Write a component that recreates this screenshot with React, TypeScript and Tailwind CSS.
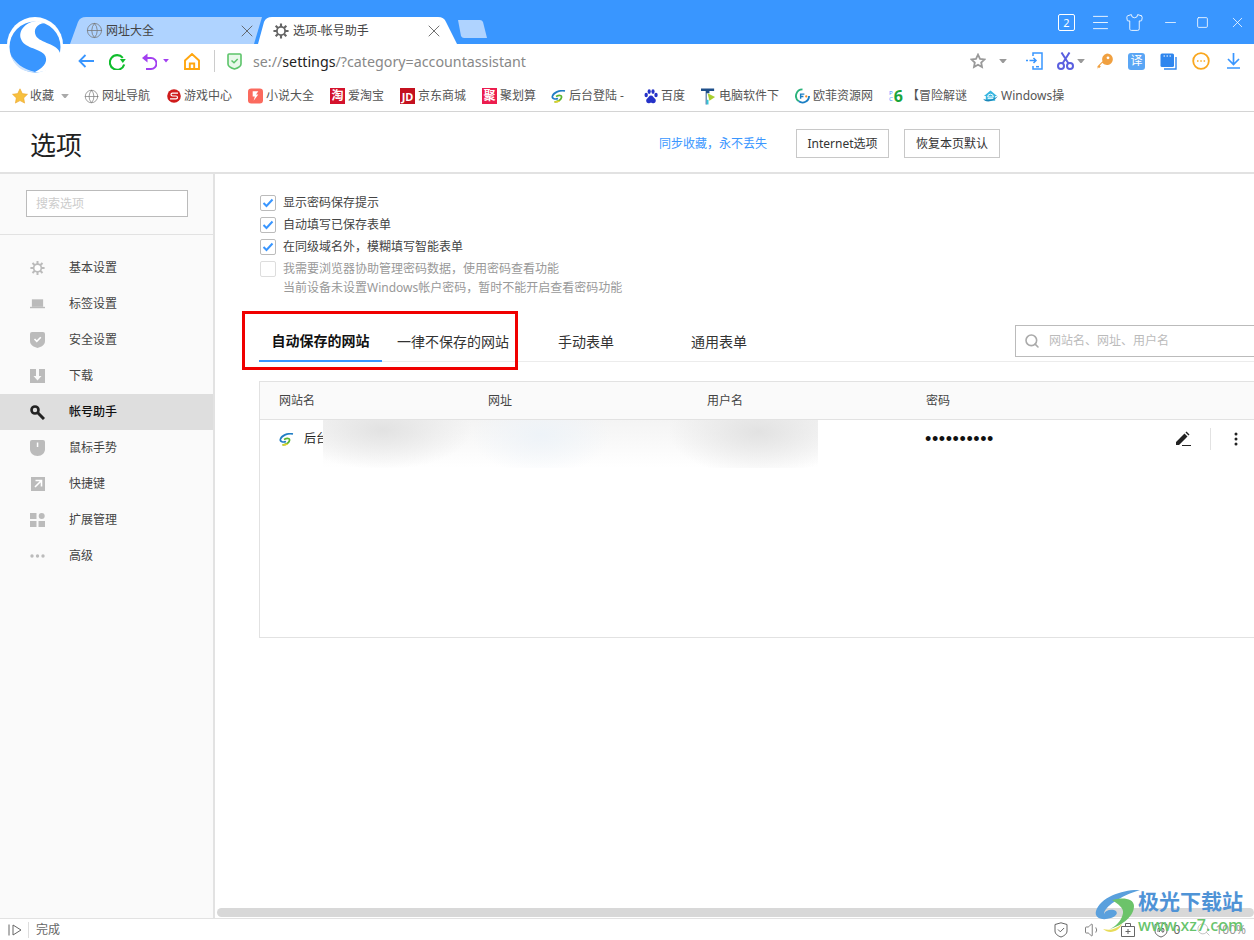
import React from "react";
import { Globe, X, Minus, Square, Menu, Shirt, Search, Volume1 } from "lucide-react";

const Caret = ({ c = "#999", w = 8 }: { c?: string; w?: number }) => (
  <svg width={w} height={w * 0.6} viewBox="0 0 8 5"><path d="M0 0h8L4 5z" fill={c} /></svg>
);

const Gear = ({ size = 18, c = "#777" }: { size?: number; c?: string }) => (
  <svg width={size} height={size} viewBox="0 0 18 18">
    <g stroke={c} strokeWidth="2.4">
      <path d="M9 0.5V17.5M0.5 9H17.5M3 3L15 15M15 3L3 15" />
    </g>
    <circle cx="9" cy="9" r="5.6" fill={c} />
    <circle cx="9" cy="9" r="3.6" fill="#fff" />
  </svg>
);

const BmIcon = ({ kind }: { kind: string }) => {
  switch (kind) {
    case "star":
      return <svg width="16" height="16" viewBox="0 0 16 16"><path d="M8 0.8l2.3 4.8 5.2.7-3.8 3.6.9 5.2L8 12.6l-4.6 2.5.9-5.2L.5 6.3l5.2-.7z" fill="#f7c03e" stroke="#eda52b" strokeWidth=".6" /></svg>;
    case "globe":
      return <Globe size={17} color="#777" strokeWidth={1.1} />;
    case "game":
      return <svg width="14" height="14" viewBox="0 0 14 14"><circle cx="7" cy="7" r="6.8" fill="#cf1b1b" /><path d="M11 4.200H5.500C3.500 4.200 3.500 7 5.500 7h3.500c2 0 2 2.800 0 2.800H3" stroke="#fff" strokeWidth="1.200" fill="none" /></svg>;
    case "novel":
      return <svg width="16" height="16" viewBox="0 0 16 16"><rect width="16" height="16" rx="3.5" fill="#fb6a5e" /><path d="M5 3h6L8.5 6.5H11L6 13l1.3-4.5H5z" fill="#fff" /></svg>;
    case "tao":
      return <span className="flex h-4 w-4 items-center justify-center bg-[#d4122c] text-[12px] font-bold leading-none text-white">淘</span>;
    case "jd":
      return <span className="flex h-4 w-4 items-center justify-center bg-[#c4111f] text-[11px] font-bold leading-none text-white">JD</span>;
    case "ju":
      return <span className="flex h-4 w-4 items-center justify-center bg-[#ec1c4e] text-[12px] font-bold leading-none text-white">聚</span>;
    case "site":
      return <SiteLogo />;
    case "baidu":
      return <svg width="14" height="15" viewBox="0 0 14 15" fill="#2532c8"><ellipse cx="2.2" cy="6" rx="1.7" ry="2.2" /><ellipse cx="5.2" cy="2.6" rx="1.6" ry="2.3" /><ellipse cx="9" cy="2.6" rx="1.6" ry="2.3" /><ellipse cx="12" cy="6" rx="1.7" ry="2.2" /><path d="M7 6.5c2 0 2.5 2 4 3.2 1.6 1.4.6 4.6-1.6 4.5-1 0-1.6-.5-2.4-.5s-1.4.5-2.4.5C2.4 14.300 1.400 11.100 3 9.700 4.500 8.500 5 6.500 7 6.500z" /></svg>;
    case "t":
      return <svg width="16" height="17" viewBox="0 0 16 17"><path d="M0 0h14v2.500H9V5H6v12H5V2.500H0z" fill="#1e4f8a" /><path d="M7 5l8 4-6 4z" fill="#a9cf2f" /><path d="M6 12h2v5H6z" fill="#32c7d8" /></svg>;
    case "ofei":
      return <svg width="16" height="16" viewBox="0 0 16 16" fill="none"><path d="M8 1a7 7 0 0 0-4 12.700" stroke="#2ab27b" strokeWidth="2" /><path d="M4 13.700A7 7 0 0 0 15 8" stroke="#1b7fc4" strokeWidth="2" /><path d="M6 11V6h4M6 8.500h3" stroke="#1b7fc4" strokeWidth="1.500" /><circle cx="12" cy="8.500" r="1.200" fill="#f08a24" /></svg>;
    case "pc6":
      return <span className="flex w-4 items-center gap-[1px] leading-none"><span className="flex flex-col text-[6px] leading-[6px] text-[#3996ff]"><span>P</span><span>C</span></span><span className="text-[16px] font-bold leading-none text-[#1aa53b]">6</span></span>;
    case "win":
      return <svg width="16" height="15" viewBox="0 0 16 15"><path d="M8 1L1 7h2v5h10V7h2z" fill="#38b6e0" /><path d="M5 8a3 3 0 1 1 6 0H5zM5 9.500h6" stroke="#fff" strokeWidth="1" fill="none" /><path d="M0 10c4 2 10 2 16-3-3 5-10 7-14 5z" fill="#1b87b8" /></svg>;
    default:
      return null;
  }
};

const SiteLogo = () => (
  <svg width="15" height="13" viewBox="0 0 15 13" fill="none">
    <path d="M14 1C9 0 3 2 1.500 6c-1 3 3 3.500 5.500 2.500" stroke="#1f7dc4" strokeWidth="1.700" />
    <path d="M5 6.500c3-1.500 6-1.500 5.500 1-.5 2.500-4 4-7 4.500" stroke="#5cb531" strokeWidth="1.700" />
    <path d="M3.500 12c2 0 3.500-.3 5-1" stroke="#e8d22c" strokeWidth="1.500" />
  </svg>
);

const bookmarks: [string, string, string][] = [
  ["globe", "网址导航", "w-[48px]"],
  ["game", "游戏中心", "w-[48px]"],
  ["novel", "小说大全", "w-[48px]"],
  ["tao", "爱淘宝", "w-[36px]"],
  ["jd", "京东商城", "w-[48px]"],
  ["ju", "聚划算", "w-[35px]"],
  ["site", "后台登陆 -", "w-[58px]"],
  ["baidu", "百度", "w-[24px]"],
  ["t", "电脑软件下", "w-[60px]"],
  ["ofei", "欧菲资源网", "w-[60px]"],
  ["pc6", "【冒险解谜", "w-[60px]"],
  ["win", "Windows操", "w-[65px]"],
];

const sideIcon = (k: string, c: string) => {
  switch (k) {
    case "gear":
      return <Gear size={16} c={c} />;
    case "tab":
      return <svg width="16" height="10" viewBox="0 0 16 10"><path d="M2 0h12v8H2z" fill={c} /><path d="M0 8h16v1.500H0z" fill={c} /></svg>;
    case "shield":
      return <svg width="15" height="16" viewBox="0 0 15 16"><path d="M0 2Q0 0 2 0h11q2 0 2 2v7c0 4-4 6-7.500 7C4 15 0 13 0 9z" fill={c} /><path d="M4.500 7l2.300 2.300 4-4" stroke="#fff" strokeWidth="1.600" fill="none" /></svg>;
    case "down":
      return <svg width="15" height="14" viewBox="0 0 15 14"><path d="M0 0h15v14H0z" fill={c} /><path d="M7.500 11.500L3.500 7h2.500V0h3v7h2.500z" fill="#fafafa" /></svg>;
    case "key":
      return <svg width="15" height="15" viewBox="0 0 15 15" fill="none"><circle cx="5" cy="5" r="3.500" stroke={c} strokeWidth="2.600" /><path d="M7.800 7.800L14 14" stroke={c} strokeWidth="3" /></svg>;
    case "mouse":
      return <svg width="15" height="16" viewBox="0 0 15 16"><path d="M0 2Q0 0 2 0h11q2 0 2 2v7c0 4-3 7-7.500 7S0 13 0 9z" fill={c} /><path d="M6.800 2.500h1.500v4.500H6.800z" fill="#fff" /></svg>;
    case "short":
      return <svg width="14" height="14" viewBox="0 0 14 14"><path d="M0 0h14v14H0z" fill={c} /><path d="M4.500 3.500h6v6M10 4L4 10" stroke="#fff" strokeWidth="1.600" fill="none" /></svg>;
    case "grid":
      return <svg width="15" height="14" viewBox="0 0 15 14" fill={c}><rect width="6.500" height="6" /><circle cx="11.700" cy="3" r="3" /><rect y="8" width="6.500" height="6" /><rect x="8.500" y="8" width="6.500" height="6" /></svg>;
    case "dots":
      return <svg width="15" height="4" viewBox="0 0 15 4" fill={c}><circle cx="2" cy="2" r="1.700" /><circle cx="7.500" cy="2" r="1.700" /><circle cx="13" cy="2" r="1.700" /></svg>;
    default:
      return null;
  }
};

const sideItems: [string, string][] = [
  ["gear", "基本设置"],
  ["tab", "标签设置"],
  ["shield", "安全设置"],
  ["down", "下载"],
  ["key", "帐号助手"],
  ["mouse", "鼠标手势"],
  ["short", "快捷键"],
  ["grid", "扩展管理"],
  ["dots", "高级"],
];

const Check = ({ on, label }: { on: boolean; label: string }) => (
  <div className={`flex h-[22px] items-center gap-[7px] text-[12px] ${on ? "text-[#444]" : "text-[#999]"}`}>
    <span className={`flex h-4 w-4 items-center justify-center rounded-[2px] border ${on ? "border-[#bbb]" : "border-[#ddd]"} bg-white`}>
      {on && <svg width="12" height="10" viewBox="0 0 12 10" fill="none"><path d="M1.500 5l3 3 6-6.500" stroke="#3996ff" strokeWidth="2" /></svg>}
    </span>
    <span>{label}</span>
  </div>
);

export default function App() {
  return (
    <div className="relative flex h-[940px] w-[1254px] flex-col overflow-hidden bg-white font-['Noto_Sans','Noto_Sans_CJK_SC',sans-serif] text-[12px] text-[#444]">
      {/* logo */}
      <svg className="absolute left-[7px] top-[17px] z-20" width="56" height="58" viewBox="0 0 56 58">
        <circle cx="28" cy="28" r="28" fill="#fff" />
        <circle cx="28" cy="30" r="25.500" fill="#3996ff" />
        <path d="M30 4C18 5 11 14 14 22C17 31 31 31 37 37C42 43 38 50 28 55C42 56 54 47 53 36C51 27 33 26 29 19C26 13 29 7 38 6Z" fill="#fff" />
        <path d="M4 38C8 46 16 52 28 55C16 56 7 49 4 38Z" fill="#cfe4fd" />
      </svg>

      {/* title bar */}
      <div className="flex h-[44px] shrink-0 items-end bg-[#3996ff] pl-[70px]">
        <div className="relative flex h-[27px] w-[192px] items-center pl-[17px]">
          <svg className="absolute inset-0 h-full w-full" viewBox="0 0 192 27" preserveAspectRatio="none"><path d="M0 27L8 5Q10 0 16 0H184Q190 0 192 0L184 27z" fill="#afd3ff" /></svg>
          <Globe className="relative -mx-[1px]" size={17} color="#777" strokeWidth={1.1} />
          <span className="relative ml-[4px] text-[12px] text-[#444]">网址大全</span>
          <X className="absolute left-[167px] top-[4px]" size={20} color="#555" strokeWidth={1} />
        </div>
        <div className="relative z-10 -ml-[4px] flex h-[27px] w-[199px] items-center pl-[15px]">
          <svg className="absolute inset-0 h-full w-full" viewBox="0 0 199 27" preserveAspectRatio="none"><path d="M0 27L6 5Q8 0 14 0H180Q186 0 188 5L199 27z" fill="#fff" /></svg>
          <span className="relative"><Gear size={16} c="#666" /></span>
          <span className="relative ml-[4px] text-[12px] text-[#444]">选项-帐号助手</span>
          <X className="absolute left-[166px] top-[4px]" size={20} color="#555" strokeWidth={1} />
        </div>
        <svg className="mb-[6px] ml-[1px]" width="29" height="18" viewBox="0 0 29 18"><path d="M0 0H22Q24 0 25 2L29 18H6Q4 18 3 16z" fill="#afd3ff" /></svg>
        <div className="mb-[6px] ml-auto flex h-[32px] items-center pr-[8px] text-white">
          <span className="flex h-[17px] w-[17px] items-center justify-center rounded-[2px] border border-white text-[11px] leading-none">2</span>
          <Menu className="ml-[15px]" size={21} strokeWidth={1} />
          <Shirt className="ml-[14px]" size={19} strokeWidth={1.1} />
          <Minus className="ml-[18px]" size={17} strokeWidth={1.1} />
          <Square className="ml-[17px]" size={13} strokeWidth={1.5} />
          <X className="ml-[20px]" size={17} strokeWidth={1.1} />
        </div>
      </div>

      {/* toolbar */}
      <div className="flex h-[34px] shrink-0 items-center bg-white pl-[78px] pr-[13px]">
        <svg width="16" height="14" viewBox="0 0 16 14" fill="none" stroke="#3996ff" strokeWidth="1.800"><path d="M1.500 7H16M7.500 1L1.500 7l6 6" /></svg>
        <svg className="ml-[15px]" width="17" height="17" viewBox="0 0 17 17" fill="none"><path d="M15.200 11.500A7.300 7.300 0 1 1 13.800 4.800" stroke="#0fbd2c" strokeWidth="2.100" /><path d="M10.800 6h6L13.800 10z" fill="#0fbd2c" /></svg>
        <svg className="ml-[16px]" width="15" height="17" viewBox="0 0 15 17" fill="none"><path d="M3 5h6a5.500 5.500 0 0 1 0 11H4" stroke="#a23ff0" strokeWidth="2" /><path d="M5.500 0.500v9L0 5z" fill="#a23ff0" /></svg>
        <span className="ml-[6px] flex"><Caret c="#a23ff0" w={6} /></span>
        <svg className="ml-[15px]" width="16" height="17" viewBox="0 0 16 17" fill="none" stroke="#ffa60f" strokeWidth="1.900"><path d="M1 7.500L8 1l7 6.500V16H1zM5.800 16v-5.500h4.400V16" /></svg>
        <span className="ml-[14px] h-[22px] w-px bg-[#ccc]" />
        <svg className="ml-[12px]" width="15" height="17" viewBox="0 0 15 17" fill="none"><path d="M1 2q0-1 1-1h11q1 0 1 1v9c0 2-3 4-6.500 5C4 15 1 13 1 11z" fill="#e8f8ea" stroke="#5cc46a" strokeWidth="1.600" /><path d="M4.500 7.500l2.500 2.300 3.700-3.800" stroke="#5cc46a" strokeWidth="1.500" /></svg>
        <span className="ml-[11px] pt-[2px] text-[14.25px] leading-none text-[#888]">se://<span className="text-[#222]">settings</span>/?category=accountassistant</span>
        <svg className="ml-auto" width="16" height="16" viewBox="0 0 16 16" fill="none"><path d="M8 1.600l2 4.200 4.500.6-3.300 3.100.8 4.500L8 11.800 4 14l.8-4.500L1.500 6.400 6 5.800z" stroke="#999" strokeWidth="1.800" /></svg>
        <span className="ml-[13px] flex"><Caret /></span>
        <svg className="ml-[19px]" width="17" height="18" viewBox="0 0 17 18" fill="none" stroke="#3996ff" strokeWidth="1.500"><path d="M7 4V1h9v16H7v-3" /><path d="M0 8.500h2M3.500 8.500H10M7.500 6L10 8.500 7.500 11" /><path d="M10 14.700h3" /></svg>
        <svg className="ml-[14px]" width="17" height="18" viewBox="0 0 17 18" fill="none" stroke="#5a5fe0" strokeWidth="2"><circle cx="4" cy="14" r="3" /><circle cx="13" cy="14" r="3" /><path d="M5.500 11.500L12.500 0.500M11.500 11.500L4.500 0.500" /></svg>
        <span className="ml-[3px] flex"><Caret /></span>
        <svg className="ml-[12px]" width="16" height="17" viewBox="0 0 16 17"><path d="M10 0.500a5.800 5.800 0 1 1-4.600 9.300L2.800 12.400l1 1L2 15.200l-1-1L.5 16.500v-3.300l5-5A5.800 5.800 0 0 1 10 .500z" fill="#f0a040" /><circle cx="11" cy="4.800" r="1.400" fill="#fff" /></svg>
        <span className="ml-[15px] flex h-[17px] w-[17px] items-center justify-center rounded-[3px] bg-[#5aa6f5] text-[12px] leading-none text-white">译</span>
        <svg className="ml-[15px]" width="17" height="17" viewBox="0 0 17 17"><rect x="0.500" y="0.500" width="13.500" height="13.500" rx="1.500" fill="#2f86ee" /><path d="M3.500 3h1.500M6.500 3H8M9.500 3H11" stroke="#fff" strokeWidth="1.200" /><path d="M16 4v12H4" stroke="#2f86ee" strokeWidth="1.400" fill="none" /></svg>
        <svg className="ml-[15px]" width="18" height="18" viewBox="0 0 18 18" fill="none"><circle cx="9" cy="9" r="7.800" stroke="#f9a71f" strokeWidth="1.800" /><path d="M5 9h1.500M8.300 9h1.500M11.600 9h1.500" stroke="#f9a71f" strokeWidth="1.600" /></svg>
        <svg className="ml-[16px]" width="15" height="16" viewBox="0 0 15 16" fill="none" stroke="#3996ff" strokeWidth="1.700"><path d="M7.500 0v11M2 6l5.500 5.500L13 6M1 15h13" /></svg>
      </div>

      {/* bookmarks */}
      <div className="flex h-[34px] shrink-0 items-center border-b border-[#d4d4d4] pl-[12px] pt-[3px]">
        <BmIcon kind="star" />
        <span className="ml-[2px] w-[24px] whitespace-nowrap text-[12px] text-[#555]">收藏</span>
        <span className="ml-[7px] flex"><Caret c="#aaa" /></span>
        <div className="ml-[15px] flex items-center gap-[16px]">
          {bookmarks.map(([k, t, w]) => (
            <div key={t} className="flex items-center gap-[3px]">
              <span className="flex w-[15px] justify-center"><BmIcon kind={k} /></span>
              <span className={`${w} whitespace-nowrap text-[#555]`}>{t}</span>
            </div>
          ))}
        </div>
      </div>

      {/* settings header */}
      <div className="flex h-[62px] shrink-0 items-center border-b-2 border-[#e2e2e2] pl-[30px] pt-[2px]">
        <span className="mt-[4px] text-[26px] leading-none text-[#222]">选项</span>
        <span className="ml-[577px] mt-[2px] text-[12px] text-[#3996ff]">同步收藏，永不丢失</span>
        <span className="ml-[29px] flex h-[29px] w-[93px] items-center justify-center border border-[#c8c8c8] pt-[1px] text-[12px] text-[#333]">Internet选项</span>
        <span className="ml-[15px] flex h-[29px] w-[96px] items-center justify-center border border-[#c8c8c8] pt-[1px] text-[12px] text-[#333]">恢复本页默认</span>
      </div>

      <div className="flex min-h-0 flex-1">
        {/* sidebar */}
        <div className="flex w-[215px] shrink-0 flex-col border-r-2 border-[#e2e2e2] bg-[#fafafa]">
          <div className="border-b border-[#e2e2e2] px-[26px] pb-[17px] pt-[16px]">
            <div className="flex h-[27px] w-[162px] items-center border border-[#bbb] bg-white pl-[9px] text-[12px] text-[#ccc]">搜索选项</div>
          </div>
          <div className="flex flex-col pt-[15px]">
            {sideItems.map(([k, t]) => {
              const on = k === "key";
              return (
                <div key={k} className={`flex h-[36px] items-center pl-[30px] ${on ? "bg-[#dedede] text-[#111]" : "text-[#444]"}`}>
                  <span className="flex w-[15px] justify-center">{sideIcon(k, on ? "#222" : "#bbb")}</span>
                  <span className={`ml-[24px] ${on ? "font-medium" : ""}`}>{t}</span>
                </div>
              );
            })}
          </div>
        </div>

        {/* main */}
        <div className="relative flex min-w-0 flex-1 flex-col overflow-hidden">
          <div className="flex-1 pl-[45px] pt-[18px]">
            <Check on label="显示密码保存提示" />
            <Check on label="自动填写已保存表单" />
            <Check on label="在同级域名外，模糊填写智能表单" />
            <Check on={false} label="我需要浏览器协助管理密码数据，使用密码查看功能" />
            <div className="pl-[23px] leading-[16px] text-[#999]">当前设备未设置Windows帐户密码，暂时不能开启查看密码功能</div>

            {/* tabs */}
            <div className="relative -ml-px mt-[20px] flex h-[46px] w-[1100px] items-stretch border-b border-[#ececec] text-[14px]">
              <div className="absolute -left-[17px] -top-[5px] h-[59px] w-[276px] border-[3px] border-[#f00000]" />
              <div className="-mb-px flex w-[123px] items-center justify-center border-b-2 border-[#3996ff] pt-[5px] font-semibold text-[#111]">自动保存的网站</div>
              <div className="flex items-center pl-[15px] pt-[5px] text-[#333]">一律不保存的网站</div>
              <div className="flex items-center pl-[49px] pt-[5px] text-[#333]">手动表单</div>
              <div className="flex items-center pl-[77px] pt-[5px] text-[#333]">通用表单</div>
              <div className="absolute left-[756px] top-[9px] flex h-[32px] w-[340px] items-center border border-[#bbb] pl-[8px] text-[12px] text-[#bbb]">
                <Search size={16} color="#aaa" strokeWidth={2.4} />
                <span className="ml-[9px]">网站名、网址、用户名</span>
              </div>
            </div>

            {/* table */}
            <div className="-ml-px mt-[19px] h-[257px] w-[1100px] border border-[#e2e2e2]">
              <div className="grid h-[38px] grid-cols-[209px_219px_219px_1fr] items-center border-b border-[#e2e2e2] bg-[#fafafa] pl-[19px] text-[12px] text-[#444]">
                <span>网站名</span><span>网址</span><span>用户名</span><span>密码</span>
              </div>
              <div className="relative grid h-[38px] grid-cols-[209px_219px_219px_1fr] items-center pl-[19px]">
                <span className="flex items-center gap-[10px] text-[#222]"><SiteLogo /><span>后台</span></span>
                <span /><span />
                <span className="-ml-[1px] font-['Liberation_Sans',sans-serif] text-[18px] leading-none tracking-[0.6px] text-[#111]">••••••••••</span>
                <svg className="absolute left-[915px] top-[11px]" width="16" height="15" viewBox="0 0 16 15" fill="#222"><path d="M1 11L9.500 2.500l3 3L4 14H1zM10.500 1.500l1-1 3 3-1 1zM7 14h9v1H7z" /></svg>
                <span className="absolute left-[950px] top-[8px] h-[22px] w-px bg-[#e2e2e2]" />
                <svg className="absolute left-[974px] top-[12px]" width="4" height="14" viewBox="0 0 4 14" fill="#222"><circle cx="2" cy="2" r="1.500" /><circle cx="2" cy="7" r="1.500" /><circle cx="2" cy="12" r="1.500" /></svg>
                <div className="absolute left-[63px] top-0 h-[48px] w-[495px] bg-[radial-gradient(ellipse_90px_40px_at_12%_20%,#e2e2e2,transparent),radial-gradient(ellipse_70px_40px_at_44%_30%,#eef3f8,transparent),radial-gradient(ellipse_90px_44px_at_88%_25%,#e2e2e2,transparent),linear-gradient(#f4f4f4,#ffffff)]" />
              </div>
            </div>
          </div>

          {/* h scrollbar */}
          <div className="h-[10px] shrink-0 pl-[2px]">
            <div className="h-[9px] rounded-full bg-[#d8d8d8]" />
          </div>
        </div>
      </div>

      {/* status bar */}
      <div className="flex h-[22px] shrink-0 items-center border-t border-[#e2e2e2] pl-[8px] pr-[8px] text-[12px] text-[#666]">
        <svg width="14" height="12" viewBox="0 0 14 12" fill="none" stroke="#666"><path d="M1 .500v11M5 1l8 5-8 5z" /></svg>
        <span className="ml-[6px] h-[16px] w-px bg-[#ddd]" />
        <span className="ml-[7px]">完成</span>
        <svg className="ml-auto" width="14" height="16" viewBox="0 0 14 16" fill="none" stroke="#666"><path d="M1 2.500L7 .800l6 1.700V9c0 3-3 5-6 6-3-1-6-3-6-6z" /><path d="M4 7.500l2.300 2.300 3.800-3.800" /></svg>
        <Volume1 className="ml-[16px]" size={18} color="#666" strokeWidth={1.1} />
        <svg className="ml-[19px]" width="14" height="14" viewBox="0 0 14 14" fill="none" stroke="#666"><path d="M.500 3.500h13v10H.500zM4.500 3.500v-3h5v3M7 6v5M4.500 8.500h5" /></svg>
        <svg className="ml-[19px]" width="14" height="16" viewBox="0 0 14 16" fill="none" stroke="#666"><path d="M1 2.500L7 .800l6 1.700V9c0 3-3 5-6 6-3-1-6-3-6-6z" /><path d="M4 10V6.500h1.500V10M8 6.500V10h1.500q1-1.700 0-3.500z" /></svg>
        <span className="ml-[6px] text-[#666]">0</span>
        <span className="ml-[16px]"><Search size={15} color="#aaa" strokeWidth={1.1} /></span>
        <span className="ml-[4px] text-[#999]">100%</span>
      </div>

      {/* watermark */}
      <div className="pointer-events-none absolute left-[1094px] top-[889px] z-30 h-[50px] w-[158px]">
        <svg className="absolute left-0 top-0" width="48" height="46" viewBox="0 0 48 46" fill="none">
          <path d="M46 1C30 0 6 8 2 22c-2 7 6 10 15 7 6-2 8-6 3-8-5-1-9 1-10 4 0-7 16-18 36-24z" fill="#5aa0dd" />
          <path d="M18 11c10-3 22-2 22 6 0 10-11 19-24 23 8-4 12-10 13-16 1-5-5-9-11-13z" fill="#6cc36a" />
          <path d="M9 40c7 2 13 0 19-5-3 7-12 11-19 5z" fill="#e8dc5a" />
        </svg>
        <span className="absolute left-[44px] top-[-1px] whitespace-nowrap text-[21px] font-bold leading-[26px] text-[#4f93d6]">极光下载站</span>
        <span className="absolute left-[44px] top-[26px] whitespace-nowrap text-[16px] font-medium leading-[20px] text-[#67c46c]">www.xz7.com</span>
      </div>
    </div>
  );
}
